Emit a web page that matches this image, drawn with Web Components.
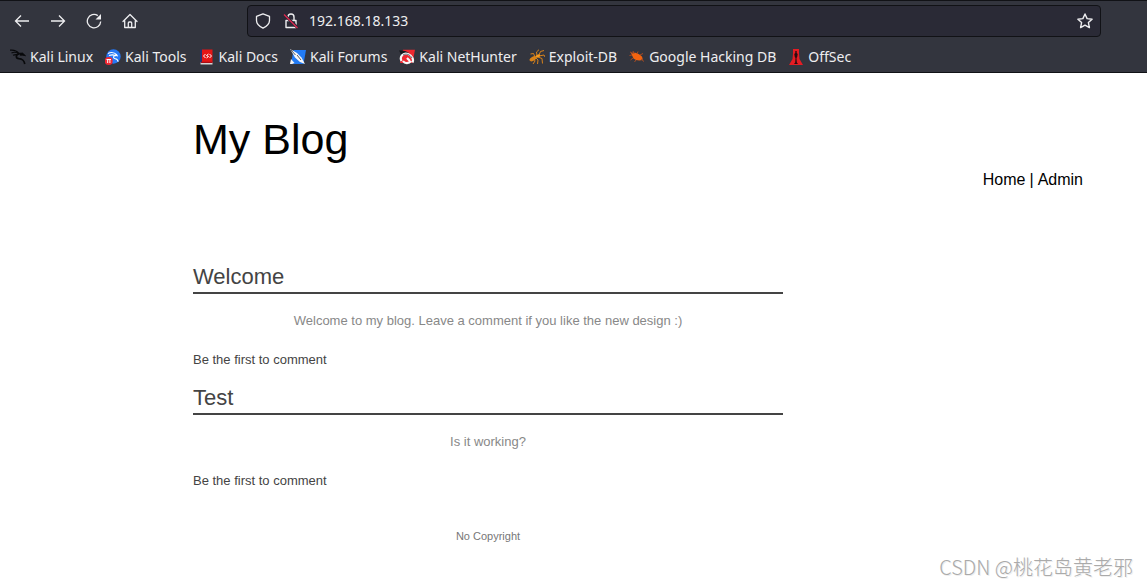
<!DOCTYPE html>
<html lang="en">
<head>
<meta charset="utf-8">
<title>My Blog</title>
<style>
html { background: #fff; }
body { margin: 0; font-family: "Liberation Sans", Arial, sans-serif; }
</style>
</head>
<body>
<browser-window>
  <browser-toolbar slot="chrome"></browser-toolbar>
  <bookmarks-bar slot="chrome">
    <bookmark-link icon="dragon">Kali Linux</bookmark-link>
    <bookmark-link icon="tools">Kali Tools</bookmark-link>
    <bookmark-link icon="docs">Kali Docs</bookmark-link>
    <bookmark-link icon="forums">Kali Forums</bookmark-link>
    <bookmark-link icon="hunter">Kali NetHunter</bookmark-link>
    <bookmark-link icon="ant">Exploit-DB</bookmark-link>
    <bookmark-link icon="bug">Google Hacking DB</bookmark-link>
    <bookmark-link icon="offsec">OffSec</bookmark-link>
  </bookmarks-bar>
  <blog-page>
    <blog-header slot="header">My Blog</blog-header>
    <blog-post heading="Welcome">Welcome to my blog. Leave a comment if you like the new design :)</blog-post>
    <blog-post heading="Test">Is it working?</blog-post>
    <blog-footer>No Copyright</blog-footer>
  </blog-page>
  <page-watermark slot="overlay">CSDN @桃花岛黄老邪</page-watermark>
</browser-window>
<script>
const ICONS = {
  back: '<path d="M15 8H1.500M7 2.500 1.500 8 7 13.500" fill="none" stroke="currentColor" stroke-width="1.300"/>',
  forward: '<path d="M1 8h13.500M9 2.500 14.500 8 9 13.500" fill="none" stroke="currentColor" stroke-width="1.300"/>',
  reload: '<path d="M11.800 2.600A6.700 6.700 0 1 0 14.700 8.500" fill="none" stroke="currentColor" stroke-width="1.300"/><path d="M15 1v5.500H9.500z" fill="currentColor"/>',
  home: '<path d="M1 8.500 8 1.500l7 7M2.700 7.500v7h10.600v-7M6.300 14.500V10q0-1 1-1h1.400q1 0 1 1v4.500" fill="none" stroke="currentColor" stroke-width="1.300" stroke-linejoin="round" stroke-linecap="round"/>',
  shield: '<path d="M8 .800 14.500 3.400V7.500c0 3.200-2.500 5.700-6.500 7.700C4 13.200 1.500 10.700 1.500 7.500V3.400z" fill="none" stroke="currentColor" stroke-width="1.300" stroke-linejoin="round"/>',
  lock: '<path d="M3 7.500h10v7H3zM5 7.500V4a3 3 0 0 1 6 0v3.500" fill="none" stroke="currentColor" stroke-width="1.400" stroke-linejoin="round"/><path d="M1.500 2 15 15" stroke="#2a2a36" stroke-width="3"/><path d="M1 1.500 14.500 15" stroke="#e22850" stroke-width="1.300"/>',
  star: '<path d="m8 1 2.100 4.600 5 .600-3.700 3.400 1 5L8 12.100l-4.400 2.500 1-5L.900 6.200l5-.600z" fill="none" stroke="currentColor" stroke-width="1.400" stroke-linejoin="round"/>',
  dragon: '<g fill="none" stroke="#08090b"><path d="M0 1.200C4 .700 7 2 9 4.500M1.500 4C4 2.700 6.500 3.300 8.500 4.700M3 6.200c2-.800 3.500-.800 5-.500" stroke-width="1.200"/><path d="M9 5C5.500 5.500 5.500 9.300 9 9.700c4 .300 5 2 5.800 5.300" stroke-width="1.700"/><path d="m8.500 4.300 4-.300 3 2.700-3-.500-2.500 0" fill="#08090b" stroke-width=".800"/></g>',
  tools: '<circle cx="8.500" cy="7.500" r="7.200" fill="#2678f5"/><path d="M3 4.500c4-2 7-.500 9 1.500M4 6.500c3-1 5-.600 6 .300-2 .300-2 2.700.200 2.900 2 .200 2.700 1.500 2.900 3M9.500 6l3.500 1" fill="none" stroke="#fff" stroke-width="1.100"/><circle cx="3.700" cy="12" r="4" fill="#ef2632"/><path d="M1.500 10.500h4.500M2.700 10.500V14M4.900 10.500V14" stroke="#fff" stroke-width="1" fill="none"/>',
  docs: '<path d="M1 .500h2.500v13H1z" fill="#27346c"/><path d="M3 .500h10.500v13H3z" fill="#e51515"/><path d="M1.500 13.500h12v2h-12z" fill="#d7d4d5"/><path d="M2 12.800h11.500v1.200H2z" fill="#a60e17"/><path d="M6.500 5 4.500 7l2 2M10.500 5l2 2-2 2M9.500 5 7.500 6.500l2 1-2 1.500" fill="none" stroke="#fff" stroke-width="1"/>',
  forums: '<path d="M3.500 1H16l-2.500 14H1z" fill="#227bf4"/><path d="m0 0 7 4 4.500 4.500 3.500 6.500-5-2-5-4.500L3 5z" fill="#f6f7f9"/><path d="m1 1 4.500 5M7 6l4 5" fill="none" stroke="#29313a" stroke-width=".800"/><path d="m1 10 3.500 4L2 15H0z" fill="#f5f5f5"/>',
  hunter: '<path d="M4 .800h12L13.500 14H1z" fill="#ed2830"/><path d="M0 1.500c5-.500 8 1 10 2.500L3 7z" fill="#16181c"/><path d="M2.500 12C0 7 5 3.500 9 5c4 1.500 6 5.500 4.500 8.500M4 12c2 3 6 2.500 8 0M8 9l3 3" fill="none" stroke="#f8f8f8" stroke-width="2.200"/><path d="M4 6c3-2 7-.500 9 3" fill="none" stroke="#29303a" stroke-width=".700"/>',
  ant: '<g stroke="#e98a17" fill="none" stroke-width=".900"><path d="M6 8 4.500 4.500 1.500 5M8 7 7.500 3 10 .700M10 6l1.500-3.500L15 1.500M10 7l5-1 1 2M9 8l4 1.500.500 5M7 9l2 2-.500 4M5 9l1 3-2 3"/></g><ellipse cx="4" cy="9.700" rx="3.800" ry="2" transform="rotate(-30 4 9.700)" fill="#d98218"/><ellipse cx="9" cy="7" rx="2.400" ry="1.500" transform="rotate(-25 9 7)" fill="#f49a20"/>',
  bug: '<path d="M2 4c3-.500 5-.500 8 1.200 3 1.500 4 3.500 3.500 5.800-3 1-7 .500-9-1.500z" fill="#f36410"/><path d="M5 5 4 2M8 5l1-2.500M11 6l3-1.500M3 6 .500 6.500M4 9l-2.500 2M7 11l-1.500 2M12 10l3 2.500M1 3l3 1.500" fill="none" stroke="#a94b22" stroke-width="1"/>',
  offsec: '<path d="M5 0h6v4.500L11.500 10l3.500 6H1l3.500-6L5 4.500z" fill="#e51c23"/><path d="M7.300 2h1.400v2l1 1-.500 3-.700 1 .300 4.500 1.200 1.500H6l1.200-1.500L7.500 9l-.700-1-.500-3 1-1z" fill="#2b0c10"/>'
};

const icon = (name, size = 16) =>
  `<svg width="${size}" height="${size}" viewBox="0 0 16 16" aria-hidden="true">${ICONS[name]}</svg>`;

function define(name, render) {
  customElements.define(name, class extends HTMLElement {
    constructor() {
      super();
      this.attachShadow({ mode: 'open' });
    }
    connectedCallback() {
      this.shadowRoot.innerHTML = render(this);
    }
  });
}

define('browser-window', () => `
<style>
:host { display: block; position: relative; min-height: 100vh; }
header { background: #33353e; border-top: 1px solid #111216; border-bottom: 1px solid #111216; color: #eeeef0; font-family: "Noto Sans", sans-serif; }
</style>
<header><slot name="chrome"></slot></header>
<slot></slot>
<slot name="overlay"></slot>`);

define('browser-toolbar', () => `
<style>
:host { display: flex; align-items: center; padding: 4px 46px 4px 4px; }
nav { display: flex; width: 243px; flex: none; }
button { display: flex; align-items: center; justify-content: center; width: 36px; height: 32px; padding: 0; border: 0; background: none; color: inherit; }
form { display: flex; flex: 1; align-items: center; box-sizing: border-box; height: 32px; padding-left: 7px; border: 1px solid #111216; border-radius: 4px; background: #2a2a36; }
.info { width: 16px; margin-right: 12px; height: 30px; }
input { flex: 1; min-width: 0; margin-left: -2px; padding: 0; border: 0; outline: 0; background: none; color: inherit; font: 14px/24px "Noto Sans", sans-serif; }
.star { width: 30px; height: 30px; }
</style>
<nav aria-label="Navigation">
  <button aria-label="Back">${icon('back')}</button>
  <button aria-label="Forward">${icon('forward')}</button>
  <button aria-label="Reload">${icon('reload')}</button>
  <button aria-label="Home">${icon('home')}</button>
</nav>
<form>
  <button type="button" class="info" aria-label="Tracking protection">${icon('shield')}</button>
  <button type="button" class="info" aria-label="Connection not secure">${icon('lock')}</button>
  <input aria-label="Address" value="192.168.18.133">
  <button type="button" class="star" aria-label="Bookmark this page">${icon('star')}</button>
</form>`);

define('bookmarks-bar', () => `
<style>
:host { display: flex; align-items: center; gap: 12px; height: 31px; padding: 0 10px; }
</style>
<slot></slot>`);

define('bookmark-link', el => `
<style>
:host { display: block; flex: none; }
a { display: flex; align-items: center; gap: 4px; color: inherit; text-decoration: none; font-size: 14px; line-height: 24px; white-space: nowrap; }
</style>
<a href="#">${icon(el.getAttribute('icon'))}<span><slot></slot></span></a>`);

define('blog-page', () => `
<style>
:host { display: block; padding: 38px 64px 0 193px; }
main { max-width: 590px; }
</style>
<slot name="header"></slot>
<main><slot></slot></main>`);

define('blog-header', () => `
<style>
:host { display: block; margin-bottom: 72px; color: #000; }
h1 { margin: 0 0 3px; font-size: 43px; line-height: 56px; font-weight: 400; }
nav { display: flex; justify-content: flex-end; gap: 4px; font-size: 16px; line-height: 20px; }
a { color: inherit; text-decoration: none; }
</style>
<h1><slot></slot></h1>
<nav><a href="#">Home</a><span>|</span><a href="#">Admin</a></nav>`);

define('blog-post', el => `
<style>
:host { display: block; margin-bottom: 15px; color: #444; font-size: 13px; line-height: 16px; }
h2 { margin: 0 0 19px; border-bottom: 2px solid #444; font-size: 22px; line-height: 30px; font-weight: 400; }
p { margin: 0 0 23px; color: #888; text-align: center; }
a { display: block; color: inherit; text-decoration: none; }
</style>
<article>
  <h2>${el.getAttribute('heading')}</h2>
  <p><slot></slot></p>
  <a href="#">Be the first to comment</a>
</article>`);

define('blog-footer', () => `
<style>
:host { display: block; padding-top: 24px; color: #777; font-size: 11px; line-height: 16px; text-align: center; }
</style>
<footer><slot></slot></footer>`);

define('page-watermark', () => `
<style>
:host { position: absolute; right: 14px; bottom: 4px; color: #aaa; font: 300 20px/32px "Noto Sans CJK SC", sans-serif; text-shadow: 1px 1px 0 #eee; white-space: nowrap; }
</style>
<slot></slot>`);
</script>
</body>
</html>
